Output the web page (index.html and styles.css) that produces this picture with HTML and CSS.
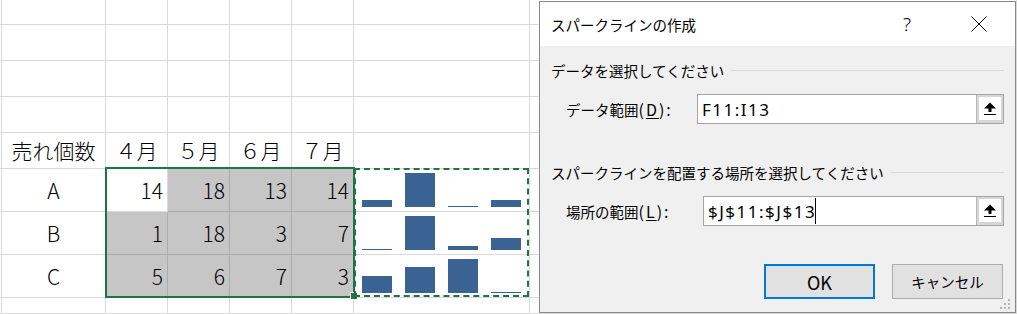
FILE: index.html
```html
<!DOCTYPE html>
<html lang="ja">
<head>
    <meta charset="UTF-8">
    <title>スパークラインの作成</title>
    <link rel="stylesheet" href="styles.css">
</head>
<body>
    <div class="sheet">
        <!-- empty rows -->
        <div class="c"></div><div class="c"></div><div class="c"></div><div class="c"></div><div class="c"></div><div class="c"></div><div class="c"></div><div class="c"></div>
        <div class="c"></div><div class="c"></div><div class="c"></div><div class="c"></div><div class="c"></div><div class="c"></div><div class="c"></div><div class="c"></div>
        <div class="c"></div><div class="c"></div><div class="c"></div><div class="c"></div><div class="c"></div><div class="c"></div><div class="c"></div><div class="c"></div>
        <div class="c"></div><div class="c"></div><div class="c"></div><div class="c"></div><div class="c"></div><div class="c"></div><div class="c"></div><div class="c"></div>

        <!-- header row -->
        <div class="c"></div>
        <div class="c mid">売れ個数</div>
        <div class="c mid">４月</div>
        <div class="c mid">５月</div>
        <div class="c mid">６月</div>
        <div class="c mid">７月</div>
        <div class="c"></div>
        <div class="c"></div>

        <!-- A -->
        <div class="c"></div>
        <div class="c mid">A</div>
        <div class="c num">14</div>
        <div class="c num sel">18</div>
        <div class="c num sel">13</div>
        <div class="c num sel">14</div>
        <div class="c spark">
            <span class="bar" style="height:7px"></span>
            <span class="bar" style="height:34px"></span>
            <span class="bar" style="height:1px"></span>
            <span class="bar" style="height:7px"></span>
        </div>
        <div class="c"></div>

        <!-- B -->
        <div class="c"></div>
        <div class="c mid">B</div>
        <div class="c num sel">1</div>
        <div class="c num sel">18</div>
        <div class="c num sel">3</div>
        <div class="c num sel">7</div>
        <div class="c spark">
            <span class="bar" style="height:1px"></span>
            <span class="bar" style="height:34px"></span>
            <span class="bar" style="height:4px"></span>
            <span class="bar" style="height:12px"></span>
        </div>
        <div class="c"></div>

        <!-- C -->
        <div class="c"></div>
        <div class="c mid">C</div>
        <div class="c num sel">5</div>
        <div class="c num sel">6</div>
        <div class="c num sel">7</div>
        <div class="c num sel">3</div>
        <div class="c spark">
            <span class="bar" style="height:17px"></span>
            <span class="bar" style="height:26px"></span>
            <span class="bar" style="height:34px"></span>
            <span class="bar" style="height:1px"></span>
        </div>
        <div class="c"></div>

        <!-- bottom row -->
        <div class="c"></div><div class="c"></div><div class="c"></div><div class="c"></div><div class="c"></div><div class="c"></div><div class="c"></div><div class="c"></div>

        <div class="selection"><span class="handle"></span></div>
        <div class="marquee"></div>
    </div>

    <div class="dialog">
        <div class="titlebar">
            <span class="title">スパークラインの作成</span>
            <span class="help">?</span>
            <svg class="close" width="16" height="16" viewBox="0 0 16 16">
                <path d="M0.5 0.5 L15.5 15.5 M15.5 0.5 L0.5 15.5" stroke="#000" stroke-width="1" fill="none"/>
            </svg>
        </div>
        <div class="content">
            <div class="group-title">データを選択してください</div>
            <div class="field-row">
                <label class="label label-data">データ範囲<span class="acc">(<u>D</u>):</span></label>
                <div class="field">
                    <span class="field-text">F11:I13</span>
                    <span class="pick"><span class="pick-btn">
                        <svg width="14" height="15" viewBox="0 0 14 15">
                            <path d="M1 7.5 L7 1.5 L13 7.5 Z" fill="#000"/>
                            <rect x="5.5" y="7" width="3" height="4" fill="#000"/>
                            <rect x="1" y="13" width="12" height="1" fill="#000"/>
                        </svg>
                    </span></span>
                </div>
            </div>

            <div class="group-title group-place">スパークラインを配置する場所を選択してください</div>
            <div class="field-row">
                <label class="label label-place">場所の範囲<span class="acc">(<u>L</u>):</span></label>
                <div class="field">
                    <span class="field-text">$J$11:$J$13<span class="caret"></span></span>
                    <span class="pick"><span class="pick-btn">
                        <svg width="14" height="15" viewBox="0 0 14 15">
                            <path d="M1 7.5 L7 1.5 L13 7.5 Z" fill="#000"/>
                            <rect x="5.5" y="7" width="3" height="4" fill="#000"/>
                            <rect x="1" y="13" width="12" height="1" fill="#000"/>
                        </svg>
                    </span></span>
                </div>
            </div>

            <div class="buttons">
                <button class="btn btn-ok">OK</button>
                <button class="btn">キャンセル</button>
            </div>
        </div>
        <svg class="grip" width="12" height="12" viewBox="0 0 12 12">
            <rect x="8" y="0" width="2" height="2" fill="#b5b5b5"/>
            <rect x="4" y="4" width="2" height="2" fill="#b5b5b5"/>
            <rect x="8" y="4" width="2" height="2" fill="#b5b5b5"/>
            <rect x="0" y="8" width="2" height="2" fill="#b5b5b5"/>
            <rect x="4" y="8" width="2" height="2" fill="#b5b5b5"/>
            <rect x="8" y="8" width="2" height="2" fill="#b5b5b5"/>
        </svg>
    </div>
</body>
</html>
```

FILE: styles.css
```css
body {
    margin: 0;
    width: 1017px;
    height: 314px;
    overflow: hidden;
    background: #fff;
    color: #000;
    position: relative;
}

/* worksheet */
.sheet {
    display: grid;
    grid-template-columns: 2px 104px 62px 62px 62px 62px 176px 1fr;
    grid-template-rows: repeat(5, 36px) repeat(3, 43px) 16px;
    margin-top: -11px;
    position: relative;
    font-family: "Noto Sans CJK JP", sans-serif;
    font-size: 21px;
    font-weight: 300;
}
.c {
    box-sizing: border-box;
    border-right: 1px solid #d9d9d9;
    border-bottom: 1px solid #d9d9d9;
    display: flex;
    align-items: center;
    line-height: 1;
}
.mid {
    justify-content: center;
}
.num {
    justify-content: flex-end;
    padding-right: 4px;
}
.sel {
    background: #c6c6c6;
    border-color: #acacac;
}
.spark {
    align-items: flex-end;
    justify-content: space-between;
    padding: 0 8px 4px 8px;
}
.bar {
    width: 30px;
    background: #3a6393;
}
.selection {
    position: absolute;
    grid-row: 6 / 9;
    grid-column: 3 / 7;
    top: -2px;
    left: -1px;
    right: -1px;
    bottom: 0;
    border: 2px solid #217346;
}
.handle {
    position: absolute;
    right: -4px;
    bottom: -3px;
    width: 6px;
    height: 6px;
    background: #217346;
    box-shadow: 0 0 0 1px #fff;
}
.marquee {
    position: absolute;
    grid-row: 6 / 9;
    grid-column: 7 / 8;
    top: -1px;
    left: 0;
    right: 1px;
    bottom: 1px;
    border: 2px dashed #217346;
}

/* dialog */
.dialog {
    position: absolute;
    left: 539px;
    top: 1px;
    width: 477px;
    height: 312px;
    box-sizing: border-box;
    border: 1px solid #8a8a8a;
    background: #f0f0f0;
    font-family: "Noto Sans CJK JP", sans-serif;
    font-size: 14.5px;
    display: flex;
    flex-direction: column;
}
.titlebar {
    height: 44px;
    background: #fff;
    display: flex;
    align-items: center;
    padding: 0 28px 0 11px;
}
.title {
    flex: 1;
}
.help {
    font-family: "Noto Sans", sans-serif;
    font-size: 19px;
    font-weight: 300;
    margin-right: 60px;
}
.content {
    flex: 1;
    display: flex;
    flex-direction: column;
    padding: 0 11px;
}
.group-title {
    display: flex;
    align-items: center;
    height: 20px;
    margin-top: 14px;
    white-space: nowrap;
}
.group-title::after {
    content: "";
    flex: 1;
    height: 1px;
    background: #dadada;
    margin-left: 7px;
}
.group-place {
    margin-top: 38px;
}
.field-row {
    display: flex;
    align-items: center;
    padding-left: 15px;
    margin-top: 14px;
}
.label {
    white-space: nowrap;
}
.label-data {
    width: 131px;
}
.label-place {
    width: 137px;
}
.acc {
    font-size: 16px;
    letter-spacing: 2px;
}
.acc u {
    text-decoration-thickness: 1px;
    text-underline-offset: 2px;
}
.field {
    flex: 1;
    height: 30px;
    box-sizing: border-box;
    display: flex;
    border: 1px solid #a5a5a5;
    background: #fff;
}
.field-text {
    flex: 1;
    display: flex;
    align-items: center;
    padding-left: 4px;
    font-family: "Noto Sans", sans-serif;
    font-size: 17px;
    letter-spacing: 1.5px;
}
.caret {
    width: 1px;
    height: 26px;
    background: #000;
    margin-left: -1px;
}
.pick {
    width: 27px;
    box-sizing: border-box;
    border-left: 1px solid #b9b9b9;
    background: #d6d6d6;
    padding: 2px 2px 3px 2px;
    display: flex;
}
.pick-btn {
    flex: 1;
    background: #fff;
    display: flex;
    align-items: center;
    justify-content: center;
}
.buttons {
    display: flex;
    justify-content: flex-end;
    gap: 17px;
    margin-top: 38px;
    padding-right: 1px;
}
.btn {
    width: 111px;
    height: 35px;
    box-sizing: border-box;
    background: #e1e1e1;
    border: 1px solid #adadad;
    font-family: "Noto Sans CJK JP", sans-serif;
    font-size: 14.5px;
    color: #000;
    padding: 0;
}
.btn-ok {
    border: 2px solid #0078d7;
    font-size: 18px;
}
.grip {
    position: absolute;
    right: 3px;
    bottom: 1px;
}
```
